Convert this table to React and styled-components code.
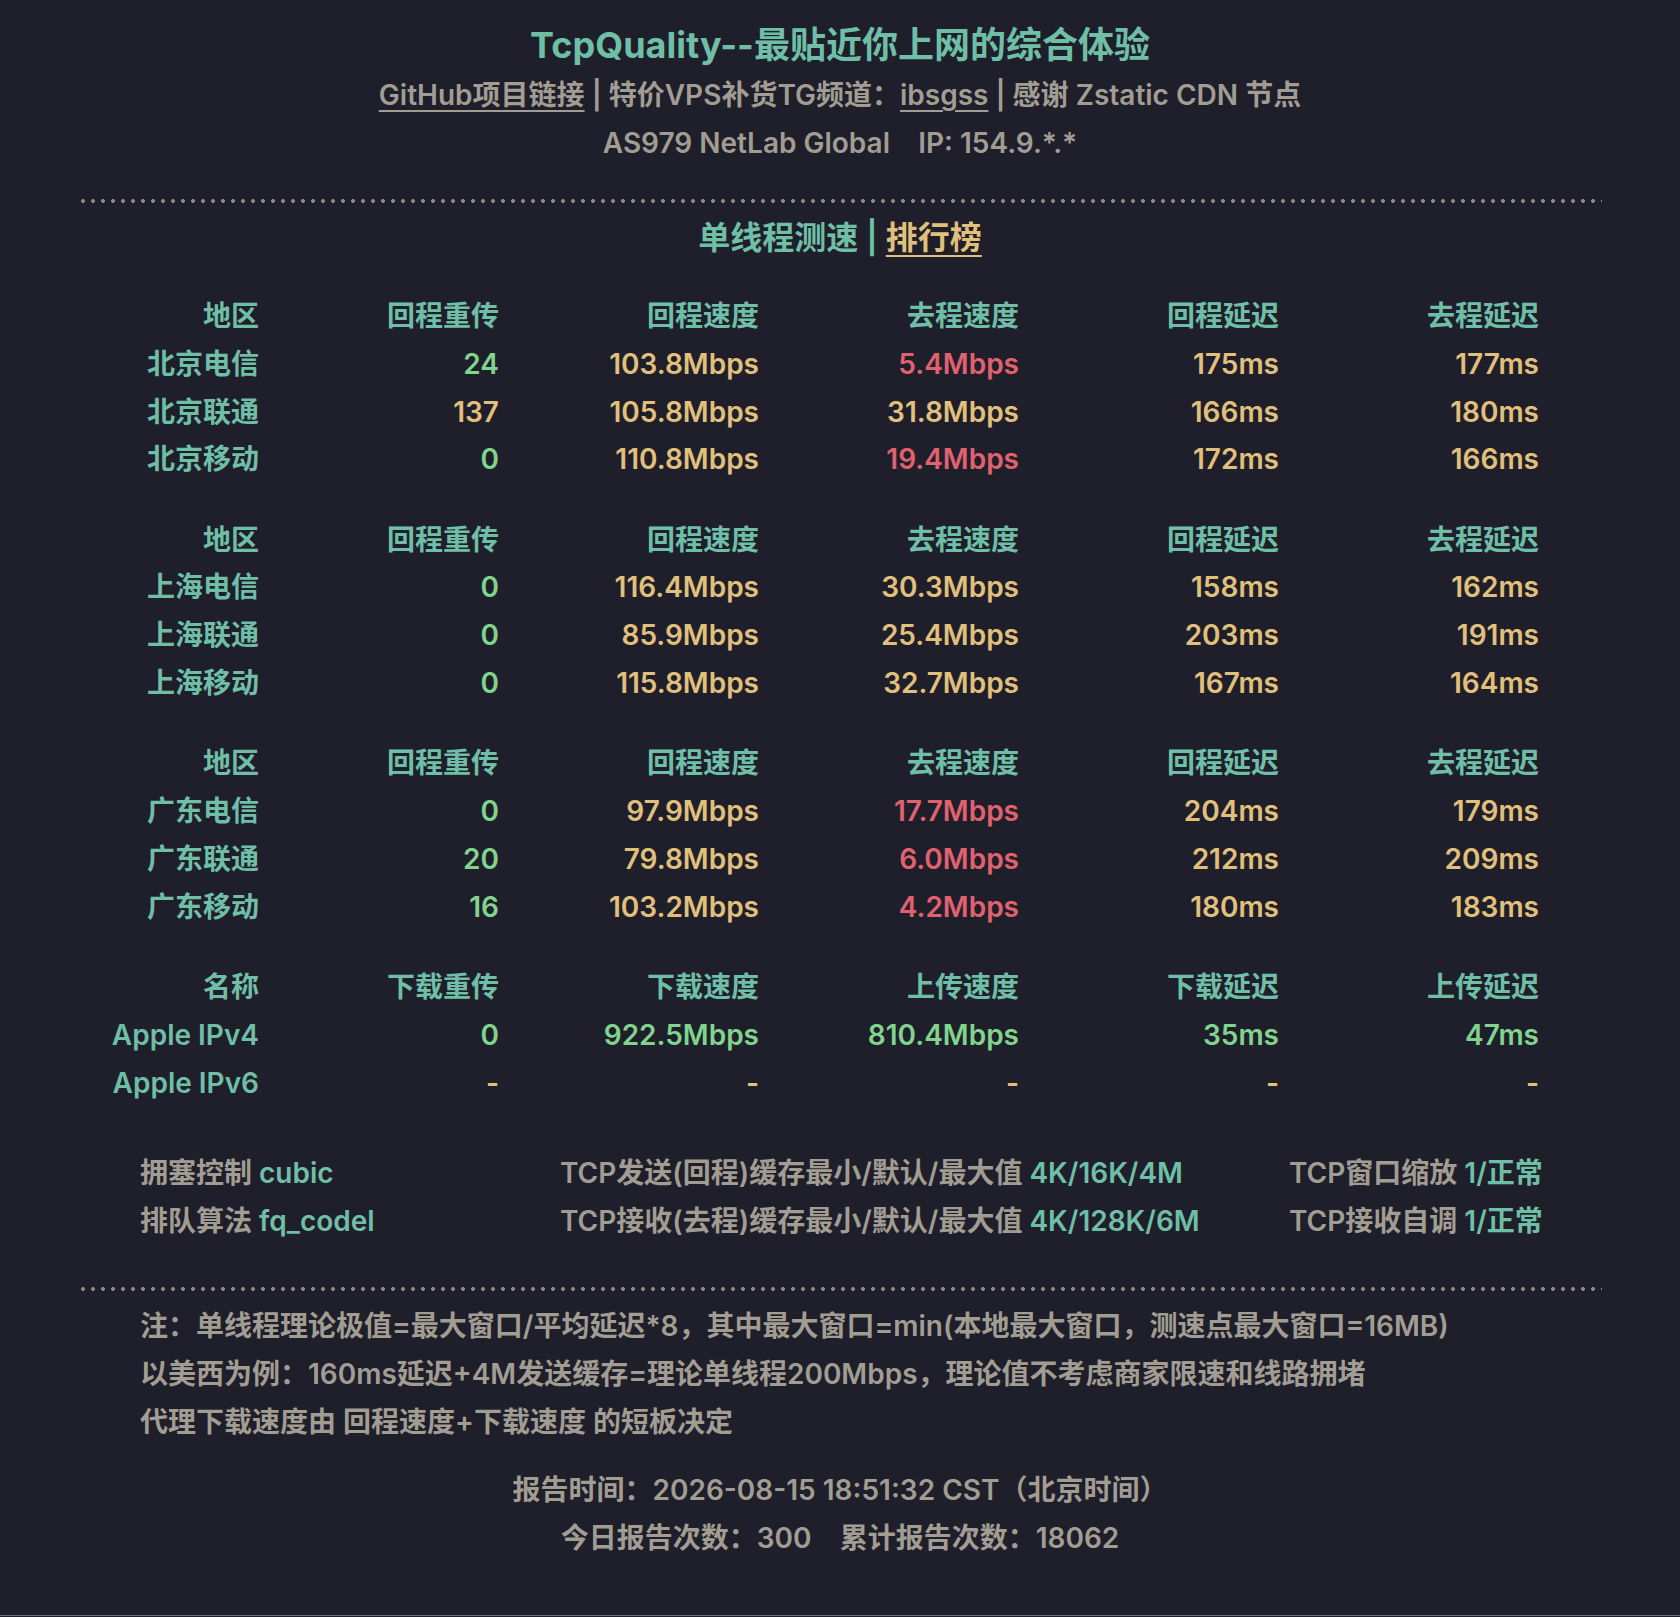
import React from "react";
import styled, { createGlobalStyle } from "styled-components";

const GlobalStyle = createGlobalStyle`
  body {
    margin: 0;
    background: #1f1e2b;
    font-family: "Inter", "Noto Sans CJK SC", sans-serif;
    font-weight: 600;
    color: #a29d92;
  }
`;

const TEAL = "#6fbea6";
const GRAY = "#a29d92";
const YELLOW = "#e1c07c";
const GREEN = "#80d48b";
const RED = "#e0626f";

const groups = [
  {
    head: ["地区", "回程重传", "回程速度", "去程速度", "回程延迟", "去程延迟"],
    rows: [
      ["北京电信", ["24", GREEN], ["103.8Mbps", YELLOW], ["5.4Mbps", RED], ["175ms", YELLOW], ["177ms", YELLOW]],
      ["北京联通", ["137", YELLOW], ["105.8Mbps", YELLOW], ["31.8Mbps", YELLOW], ["166ms", YELLOW], ["180ms", YELLOW]],
      ["北京移动", ["0", GREEN], ["110.8Mbps", YELLOW], ["19.4Mbps", RED], ["172ms", YELLOW], ["166ms", YELLOW]],
    ],
  },
  {
    head: ["地区", "回程重传", "回程速度", "去程速度", "回程延迟", "去程延迟"],
    rows: [
      ["上海电信", ["0", GREEN], ["116.4Mbps", YELLOW], ["30.3Mbps", YELLOW], ["158ms", YELLOW], ["162ms", YELLOW]],
      ["上海联通", ["0", GREEN], ["85.9Mbps", YELLOW], ["25.4Mbps", YELLOW], ["203ms", YELLOW], ["191ms", YELLOW]],
      ["上海移动", ["0", GREEN], ["115.8Mbps", YELLOW], ["32.7Mbps", YELLOW], ["167ms", YELLOW], ["164ms", YELLOW]],
    ],
  },
  {
    head: ["地区", "回程重传", "回程速度", "去程速度", "回程延迟", "去程延迟"],
    rows: [
      ["广东电信", ["0", GREEN], ["97.9Mbps", YELLOW], ["17.7Mbps", RED], ["204ms", YELLOW], ["179ms", YELLOW]],
      ["广东联通", ["20", GREEN], ["79.8Mbps", YELLOW], ["6.0Mbps", RED], ["212ms", YELLOW], ["209ms", YELLOW]],
      ["广东移动", ["16", GREEN], ["103.2Mbps", YELLOW], ["4.2Mbps", RED], ["180ms", YELLOW], ["183ms", YELLOW]],
    ],
  },
  {
    head: ["名称", "下载重传", "下载速度", "上传速度", "下载延迟", "上传延迟"],
    rows: [
      ["Apple IPv4", ["0", GREEN], ["922.5Mbps", GREEN], ["810.4Mbps", GREEN], ["35ms", GREEN], ["47ms", GREEN]],
      ["Apple IPv6", ["-", YELLOW], ["-", YELLOW], ["-", YELLOW], ["-", YELLOW], ["-", YELLOW]],
    ],
  },
];

const App = () => {
  return (
    <Page>
      <GlobalStyle />
      <Header>
        <Title>TcpQuality--最贴近你上网的综合体验</Title>
        <Line $shift={-2}>
          <Link>GitHub项目链接</Link> | 特价VPS补货TG频道：<Link>ibsgss</Link> | 感谢 Zstatic CDN 节点
        </Line>
        <Line $shift={2}>AS979 NetLab Global&nbsp;&nbsp;&nbsp; IP: 154.9.*.*</Line>
      </Header>

      <Dots />

      <SectionTitle>
        单线程测速 | <RankLink>排行榜</RankLink>
      </SectionTitle>

      <Tables>
        {groups.map((g, gi) => (
          <Grid key={gi}>
            {g.head.map((h) => (
              <Cell key={h} $color={TEAL}>{h}</Cell>
            ))}
            {g.rows.map((r) => (
              <React.Fragment key={r[0]}>
                <Cell $color={TEAL}>{r[0]}</Cell>
                {r.slice(1).map(([v, c], i) => (
                  <Cell key={i} $color={c}>{v}</Cell>
                ))}
              </React.Fragment>
            ))}
          </Grid>
        ))}
      </Tables>

      <Info>
        <span>拥塞控制 <Val>cubic</Val></span>
        <span>TCP发送(回程)缓存最小/默认/最大值 <Val>4K/16K/4M</Val></span>
        <span>TCP窗口缩放 <Val>1/正常</Val></span>
        <span>排队算法 <Val>fq_codel</Val></span>
        <span>TCP接收(去程)缓存最小/默认/最大值 <Val>4K/128K/6M</Val></span>
        <span>TCP接收自调 <Val>1/正常</Val></span>
      </Info>

      <Dots $top={42} />

      <Notes>
        <div>注：单线程理论极值=最大窗口/平均延迟*8，其中最大窗口=min(本地最大窗口，测速点最大窗口=16MB)</div>
        <div>以美西为例：160ms延迟+4M发送缓存=理论单线程200Mbps，理论值不考虑商家限速和线路拥堵</div>
        <div>代理下载速度由 回程速度+下载速度 的短板决定</div>
      </Notes>

      <Footer>
        <div>报告时间：2026-08-15 18:51:32 CST（北京时间）</div>
        <div>今日报告次数：300&nbsp;&nbsp;&nbsp; 累计报告次数：18062</div>
      </Footer>
    </Page>
  );
};

const Page = styled.div`
  width: 1680px;
  min-height: 1616px;
  padding-top: 21px;
  box-sizing: border-box;
  border-bottom: 1px solid #6b6a75;
`;

const Header = styled.div`
  display: flex;
  flex-direction: column;
  align-items: center;
`;

const Title = styled.div`
  font-size: 36px;
  line-height: 48px;
  font-weight: 700;
  color: ${TEAL};
`;

const Line = styled.div`
  font-size: 28px;
  line-height: 48px;
  color: ${GRAY};
  padding-top: ${(p) => (p.$shift > 0 ? p.$shift : 0)}px;
  margin-top: ${(p) => (p.$shift < 0 ? -p.$shift : 0)}px;
  margin-bottom: ${(p) => (p.$shift > 0 ? -p.$shift : p.$shift)}px;
`;

const Link = styled.span`
  text-decoration: underline;
  text-decoration-thickness: 2px;
  text-underline-offset: 5px;
`;

const Dots = styled.div`
  margin: ${(p) => p.$top || 34}px 78px 0;
  height: 4px;
  background-image: radial-gradient(circle, #8e897f 1.7px, transparent 2.2px);
  background-size: 10px 4px;
  background-position: 0 0;
`;

const SectionTitle = styled.div`
  margin-top: 11px;
  text-align: center;
  font-size: 32px;
  line-height: 48px;
  color: ${TEAL};
`;

const RankLink = styled.span`
  color: ${YELLOW};
  text-decoration: underline;
  text-decoration-thickness: 2px;
  text-underline-offset: 6px;
`;

const Tables = styled.div`
  margin-top: 31px;
  margin-left: 59px;
  display: flex;
  flex-direction: column;
  gap: 32.5px;
`;

const Grid = styled.div`
  display: grid;
  grid-template-columns: 200px 240px 260px 260px 260px 260px;
  grid-auto-rows: 47.8px;
`;

const Cell = styled.div`
  text-align: right;
  font-size: 28px;
  line-height: 47.8px;
  color: ${(p) => p.$color};
`;

const Info = styled.div`
  margin-top: 42px;
  margin-left: 140px;
  display: grid;
  grid-template-columns: 420px 729px auto;
  font-size: 28px;
  line-height: 48px;
  color: ${GRAY};
`;

const Val = styled.span`
  color: ${TEAL};
`;

const Notes = styled.div`
  margin-top: 11px;
  padding-left: 140px;
  font-size: 28px;
  line-height: 48px;
  color: ${GRAY};
`;

const Footer = styled.div`
  margin-top: 20px;
  text-align: center;
  font-size: 28px;
  line-height: 48px;
  color: ${GRAY};
`;

export default App;
